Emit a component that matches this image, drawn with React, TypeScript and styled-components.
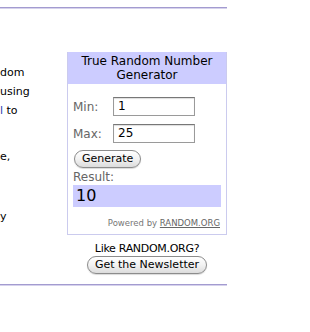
import React from "react";
import styled, { createGlobalStyle } from "styled-components";

const Global = createGlobalStyle`
  html, body { margin: 0; padding: 0; background: #fff; }
  body { font-family: "DejaVu Sans", Verdana, sans-serif; color: #000; }
`;

const Page = styled.div`
  width: 227px;
  padding-top: 7px;
`;

const Rule = styled.div`
  height: 1px;
  background: #a39bd0;
  border-bottom: 1px solid #d6d2ec;
`;

const Main = styled.div`
  display: flex;
  align-items: flex-start;
`;

const SideText = styled.div`
  width: 67px;
  flex: none;
  overflow: hidden;
  font-size: 11px;
  padding-top: 54px;
`;

const SideLine = styled.div<{ $gap?: number }>`
  height: 19px;
  line-height: 19px;
  white-space: nowrap;
  margin-top: ${(p) => p.$gap ?? 0}px;
`;

const Link = styled.span`
  color: #2a3fb0;
`;

const Column = styled.div`
  width: 160px;
  flex: none;
  padding-top: 43px;
`;

const Box = styled.div`
  border: 1px solid #cbcbee;
  border-top: none;
`;

const Header = styled.div`
  background: #ccccff;
  text-align: center;
  font-size: 12px;
  line-height: 14px;
  padding: 2px 0 2px;
`;

const Body = styled.div`
  padding: 13px 5px 6px 5px;
  display: flex;
  flex-direction: column;
`;

const Row = styled.div<{ $mt?: number }>`
  display: flex;
  align-items: center;
  margin-top: ${(p) => p.$mt ?? 0}px;
`;

const Label = styled.span`
  width: 40px;
  font-size: 12px;
  color: #666;
`;

const Input = styled.div`
  width: 76px;
  height: 17px;
  border: 1px solid #9a9a9a;
  border-top-color: #777;
  box-shadow: inset 0 1px 1px #ddd;
  font-size: 12px;
  line-height: 17px;
  padding-left: 4px;
  box-sizing: content-box;
  background: #fff;
`;

const Pill = styled.button`
  font-family: "DejaVu Sans", Verdana, sans-serif;
  font-size: 11px;
  color: #000;
  height: 18px;
  padding: 0 7px;
  border: 1px solid #8c8c8c;
  border-radius: 9px;
  background: linear-gradient(#ffffff, #f2f2f2 50%, #dcdcdc);
  box-shadow: 0 1px 1px rgba(0, 0, 0, 0.15);
  line-height: 16px;
  cursor: pointer;
`;

const GenerateButton = styled(Pill)`
  align-self: flex-start;
  margin-top: 7px;
  margin-left: 1px;
`;

const ResultLabel = styled.div`
  font-size: 12px;
  color: #666;
  margin-top: 2px;
  line-height: 15px;
`;

const ResultValue = styled.div`
  background: #ccccff;
  height: 22px;
  line-height: 22px;
  font-size: 16px;
  padding-left: 3px;
`;

const Powered = styled.div`
  text-align: right;
  font-size: 8.5px;
  color: #777;
  margin-top: 11px;
  margin-right: 1px;
`;

const PoweredLink = styled.span`
  text-decoration: underline;
  color: #666;
`;

const NewsletterArea = styled.div`
  display: flex;
  flex-direction: column;
  align-items: center;
  padding: 6px 0 10px 67px;
`;

const LikeText = styled.div`
  font-family: "DejaVu Sans", "Lucida Grande", sans-serif;
  font-size: 11px;
  line-height: 16px;
  letter-spacing: -0.3px;
`;

const NewsButton = styled(Pill)`
  margin-top: -1px;
`;

export default function App() {
  return (
    <>
      <Global />
      <Page>
        <Rule />
        <Main>
          <SideText>
            <SideLine>dom</SideLine>
            <SideLine>using</SideLine>
            <SideLine>
              <Link>l</Link> to
            </SideLine>
            <SideLine $gap={27}>e,</SideLine>
            <SideLine $gap={41}>y</SideLine>
          </SideText>
          <Column>
            <Box>
              <Header>
                True Random Number
                <br />
                Generator
              </Header>
              <Body>
                <Row>
                  <Label>Min:</Label>
                  <Input>1</Input>
                </Row>
                <Row $mt={8}>
                  <Label>Max:</Label>
                  <Input>25</Input>
                </Row>
                <GenerateButton>Generate</GenerateButton>
                <ResultLabel>Result:</ResultLabel>
                <ResultValue>10</ResultValue>
                <Powered>
                  Powered by <PoweredLink>RANDOM.ORG</PoweredLink>
                </Powered>
              </Body>
            </Box>
          </Column>
        </Main>
        <NewsletterArea>
          <LikeText>Like RANDOM.ORG?</LikeText>
          <NewsButton>Get the Newsletter</NewsButton>
        </NewsletterArea>
        <Rule />
      </Page>
    </>
  );
}
